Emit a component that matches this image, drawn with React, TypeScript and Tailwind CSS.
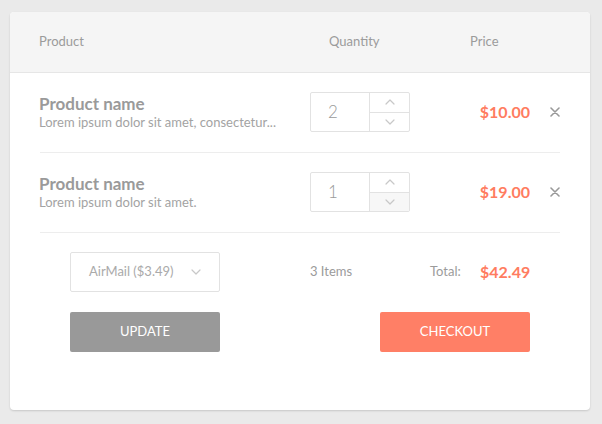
import React from 'react';

const items = [
  { id: 1, name: 'Product name', desc: 'Lorem ipsum dolor sit amet, consectetur...', qty: 2, price: '$10.00', downActive: false },
  { id: 2, name: 'Product name', desc: 'Lorem ipsum dolor sit amet.', qty: 1, price: '$19.00', downActive: true },
];

const Chevron: React.FC<{ up?: boolean; className?: string }> = ({ up, className }) => (
  <svg width="10" height="6" viewBox="0 0 10 6" className={className}>
    <path
      d={up ? 'M1 5 L5 1 L9 5' : 'M1 1 L5 5 L9 1'}
      fill="none"
      stroke="currentColor"
      strokeWidth="1.2"
      strokeLinecap="round"
      strokeLinejoin="round"
    />
  </svg>
);

const Cross = () => (
  <svg width="10" height="10" viewBox="0 0 10 10" className="text-[#999]">
    <path d="M1 1 L9 9 M9 1 L1 9" stroke="currentColor" strokeWidth="1.6" strokeLinecap="round" />
  </svg>
);

const App: React.FC = () => {
  return (
    <div className="min-h-[424px] w-[602px] bg-[#eaeaea] pt-[12px] font-['Lato',sans-serif]">
      <div className="ml-[10px] w-[580px] h-[398px] bg-white rounded-[4px] shadow-[0_1px_2px_rgba(0,0,0,0.15)] overflow-hidden">
        {/* Header */}
        <div className="h-[61px] bg-[#f5f5f5] border-b border-[#e6e6e6] flex items-center px-[29px] text-[13px] text-[#9b9b9b]">
          <div className="w-[290px]">Product</div>
          <div className="w-[141px]">Quantity</div>
          <div>Price</div>
        </div>

        {/* Rows */}
        <div className="px-[30px]">
          {items.map(it => (
            <div key={it.id} className="flex items-center h-[80px] pt-[19px] pb-[20px] border-b border-[#ededed]">
              <div className="w-[270px]">
                <div className="-ml-[1px] text-[17px] font-bold leading-[20px] text-[#9a9a9a]">{it.name}</div>
                <div className="-ml-[1px] text-[13px] leading-[17px] text-[#a3a3a3]">{it.desc}</div>
              </div>
              <div className="flex w-[100px] h-[40px] border border-[#e2e2e2] rounded-[2px]">
                <div className="w-[59px] flex items-center pl-[17px] text-[17px] font-light text-[#9a9a9a] border-r border-[#e2e2e2]">
                  {it.qty}
                </div>
                <div className="flex-1 flex flex-col">
                  <div className="flex-1 flex items-center justify-center border-b border-[#e2e2e2]">
                    <Chevron up className="text-[#c8c8c8]" />
                  </div>
                  <div className={`flex-1 flex items-center justify-center ${it.downActive ? 'bg-[#f7f7f7]' : ''}`}>
                    <Chevron className="text-[#c8c8c8]" />
                  </div>
                </div>
              </div>
              <div className="w-[120px] text-right text-[16px] font-bold text-[#ff7c60]">{it.price}</div>
              <div className="w-[30px] flex justify-end -mr-[1px]">
                <Cross />
              </div>
            </div>
          ))}
        </div>

        {/* Footer */}
        <div className="px-[60px] pt-[19px]">
          <div className="flex items-center h-[40px]">
            <div className="w-[150px] h-[40px] border border-[#e2e2e2] rounded-[2px] flex items-center justify-between pl-[18px] pr-[18px] text-[13px] text-[#aaa]">
              <span>AirMail ($3.49)</span>
              <Chevron className="text-[#c8c8c8]" />
            </div>
            <div className="w-[90px]" />
            <div className="w-[120px] text-[13px] text-[#9b9b9b]">3 Items</div>
            <div className="w-[50px] text-[13px] text-[#9b9b9b]">Total:</div>
            <div className="w-[50px] text-right text-[16px] font-bold text-[#ff7c60]">$42.49</div>
          </div>
          <div className="flex justify-between w-[460px] mt-[20px]">
            <button className="w-[150px] h-[40px] bg-[#999] rounded-[2px] text-white text-[13px] uppercase">Update</button>
            <button className="w-[150px] h-[40px] bg-[#ff7f66] rounded-[2px] text-white text-[13px] uppercase">Checkout</button>
          </div>
        </div>
      </div>
    </div>
  );
};

export default App;
